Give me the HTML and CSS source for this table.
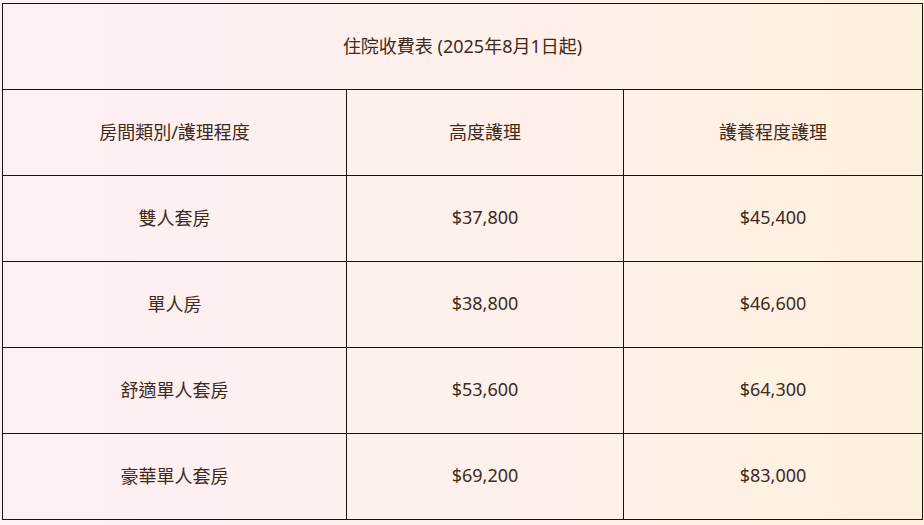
FILE: index.html
```html
<!DOCTYPE html>
<html lang="zh-Hant">
<head>
<meta charset="utf-8">
<link rel="stylesheet" href="styles.css">
</head>
<body>
<table class="fees">
  <colgroup>
    <col class="c1"><col class="c2"><col class="c3">
  </colgroup>
  <tr><td colspan="3">住院收費表 (2025年8月1日起)</td></tr>
  <tr><td>房間類別/護理程度</td><td>高度護理</td><td>護養程度護理</td></tr>
  <tr><td>雙人套房</td><td>$37,800</td><td>$45,400</td></tr>
  <tr><td>單人房</td><td>$38,800</td><td>$46,600</td></tr>
  <tr><td>舒適單人套房</td><td>$53,600</td><td>$64,300</td></tr>
  <tr><td>豪華單人套房</td><td>$69,200</td><td>$83,000</td></tr>
</table>
</body>
</html>
```
FILE: styles.css
```css
html, body {
  margin: 0;
  height: 100%;
}
body {
  background: linear-gradient(90deg, #fef0f5 0%, #fef0eb 50%, #fef0df 100%);
  padding: 3px 0 0 2px;
  box-sizing: border-box;
  font-family: "Noto Sans", "Noto Sans CJK TC", sans-serif;
  font-size: 18px;
  color: #3f2a1c;
}
.fees {
  border-collapse: collapse;
  width: 920px;
  table-layout: fixed;
}
.c1 { width: 344px; }
.c2 { width: 277px; }
.c3 { width: 299px; }
.fees td {
  border: 1px solid #1a1210;
  height: 82px;
  padding: 0 0 3px;
  text-align: center;
  vertical-align: middle;
}
```
